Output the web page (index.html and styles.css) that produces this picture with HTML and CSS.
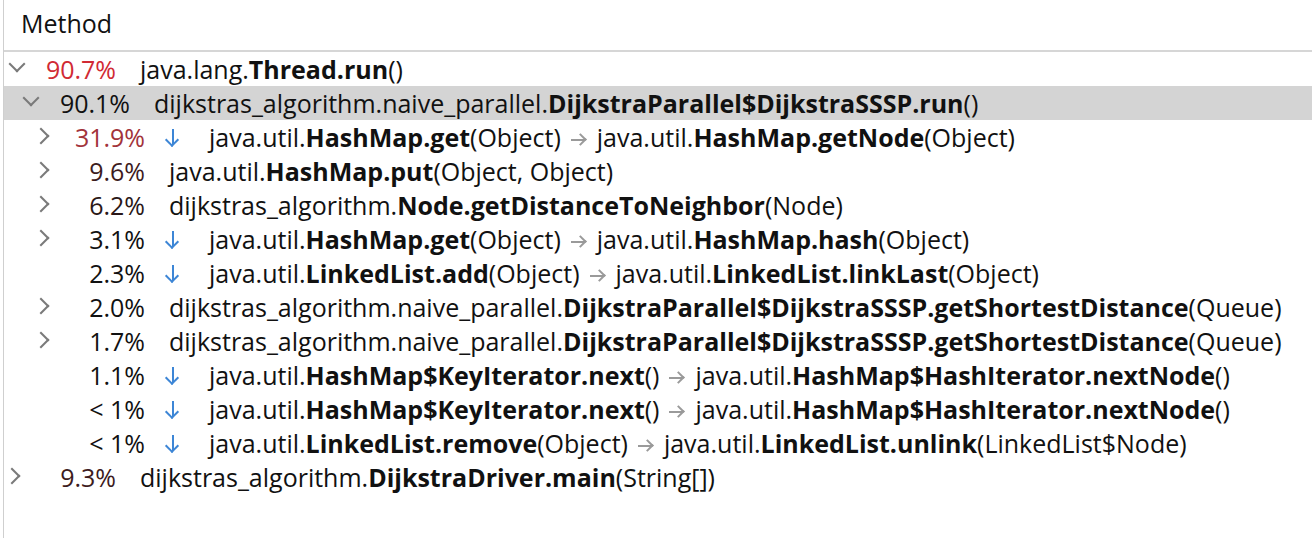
FILE: index.html
```html
<!DOCTYPE html>
<html lang="en">
<head>
    <meta charset="UTF-8">
    <title>Call Tree</title>
    <link rel="stylesheet" href="styles.css">
</head>
<body>
    <div class="tree">
        <div class="header">Method</div>

        <div class="row lvl0">
            <span class="tog open"></span>
            <span class="pct hot">90.7%</span>
            <span class="name">java.lang.<b>Thread.run</b>()</span>
        </div>
        <div class="row lvl1 selected">
            <span class="tog open"></span>
            <span class="pct">90.1%</span>
            <span class="name">dijkstras_algorithm.naive_parallel.<b>DijkstraParallel$DijkstraSSSP.run</b>()</span>
        </div>
        <div class="row lvl2">
            <span class="tog closed"></span>
            <span class="pct warm">31.9%</span>
            <span class="down"></span>
            <span class="name">java.util.<b>HashMap.get</b>(Object)<span class="via"></span>java.util.<b>HashMap.getNode</b>(Object)</span>
        </div>
        <div class="row lvl2">
            <span class="tog closed"></span>
            <span class="pct mild">9.6%</span>
            <span class="name">java.util.<b>HashMap.put</b>(Object, Object)</span>
        </div>
        <div class="row lvl2">
            <span class="tog closed"></span>
            <span class="pct faint">6.2%</span>
            <span class="name">dijkstras_algorithm.<b>Node.getDistanceToNeighbor</b>(Node)</span>
        </div>
        <div class="row lvl2">
            <span class="tog closed"></span>
            <span class="pct">3.1%</span>
            <span class="down"></span>
            <span class="name">java.util.<b>HashMap.get</b>(Object)<span class="via"></span>java.util.<b>HashMap.hash</b>(Object)</span>
        </div>
        <div class="row lvl2">
            <span class="tog"></span>
            <span class="pct">2.3%</span>
            <span class="down"></span>
            <span class="name">java.util.<b>LinkedList.add</b>(Object)<span class="via"></span>java.util.<b>LinkedList.linkLast</b>(Object)</span>
        </div>
        <div class="row lvl2">
            <span class="tog closed"></span>
            <span class="pct">2.0%</span>
            <span class="name">dijkstras_algorithm.naive_parallel.<b>DijkstraParallel$DijkstraSSSP.getShortestDistance</b>(Queue)</span>
        </div>
        <div class="row lvl2">
            <span class="tog closed"></span>
            <span class="pct">1.7%</span>
            <span class="name">dijkstras_algorithm.naive_parallel.<b>DijkstraParallel$DijkstraSSSP.getShortestDistance</b>(Queue)</span>
        </div>
        <div class="row lvl2">
            <span class="tog"></span>
            <span class="pct">1.1%</span>
            <span class="down"></span>
            <span class="name">java.util.<b>HashMap$KeyIterator.next</b>()<span class="via"></span>java.util.<b>HashMap$HashIterator.nextNode</b>()</span>
        </div>
        <div class="row lvl2">
            <span class="tog"></span>
            <span class="pct">&lt; 1%</span>
            <span class="down"></span>
            <span class="name">java.util.<b>HashMap$KeyIterator.next</b>()<span class="via"></span>java.util.<b>HashMap$HashIterator.nextNode</b>()</span>
        </div>
        <div class="row lvl2">
            <span class="tog"></span>
            <span class="pct">&lt; 1%</span>
            <span class="down"></span>
            <span class="name">java.util.<b>LinkedList.remove</b>(Object)<span class="via"></span>java.util.<b>LinkedList.unlink</b>(LinkedList$Node)</span>
        </div>
        <div class="row lvl0">
            <span class="tog closed"></span>
            <span class="pct mild">9.3%</span>
            <span class="name">dijkstras_algorithm.<b>DijkstraDriver.main</b>(String[])</span>
        </div>
    </div>
</body>
</html>
```

FILE: styles.css
```css
body {
    margin: 0;
    font-family: "Open Sans", "Noto Sans", sans-serif;
    font-size: 25px;
    color: #111;
    background: #fff;
    overflow: hidden;
}

.tree {
    margin-left: 3px;
    border-left: 1px solid #cfcfcf;
    height: 538px;
}

.header {
    height: 50px;
    line-height: 46px;
    padding-left: 17px;
    border-bottom: 2px solid #d6d6d6;
}

.row {
    display: flex;
    align-items: center;
    height: 34px;
    white-space: nowrap;
}

.row.selected {
    background: #d4d4d4;
}

.lvl1 {
    padding-left: 14px;
}

.lvl2 {
    padding-left: 29px;
}

.tog {
    width: 28px;
    height: 34px;
    flex: none;
    position: relative;
}

.tog.open::before,
.tog.closed::before {
    content: "";
    position: absolute;
    width: 10px;
    height: 10px;
    border-right: 2px solid #7a7a7a;
    border-bottom: 2px solid #7a7a7a;
}

.tog.open::before {
    left: 7px;
    top: 6px;
    transform: rotate(45deg);
}

.tog.closed::before {
    left: 2px;
    top: 10px;
    transform: rotate(-45deg);
}

.pct {
    width: 84px;
    flex: none;
    text-align: right;
}

.pct.hot {
    color: #d12a34;
}

.pct.warm {
    color: #a2333b;
}

.pct.mild {
    color: #3d1b1d;
}

.pct.faint {
    color: #2a1717;
}

.name {
    margin-left: 24px;
}

.name b {
    font-weight: 700;
}

.down {
    width: 17px;
    height: 20px;
    margin: 0 27px 0 20px;
    flex: none;
    position: relative;
}

.down::before {
    content: "";
    position: absolute;
    left: 7px;
    top: 2px;
    width: 2px;
    height: 16px;
    background: #3d86d6;
}

.down::after {
    content: "";
    position: absolute;
    left: 2px;
    top: 8px;
    width: 8px;
    height: 8px;
    border-right: 2px solid #3d86d6;
    border-bottom: 2px solid #3d86d6;
    transform: rotate(45deg);
}

.down + .name {
    margin-left: 0;
}

.via {
    display: inline-block;
    width: 16px;
    height: 14px;
    margin: 0 11px 0 9px;
    position: relative;
}

.via::before {
    content: "";
    position: absolute;
    left: 1px;
    top: 6px;
    width: 14px;
    height: 2px;
    background: #9a9a9a;
}

.via::after {
    content: "";
    position: absolute;
    left: 6px;
    top: 2px;
    width: 7px;
    height: 7px;
    border-right: 2px solid #9a9a9a;
    border-top: 2px solid #9a9a9a;
    transform: rotate(45deg);
}
```
